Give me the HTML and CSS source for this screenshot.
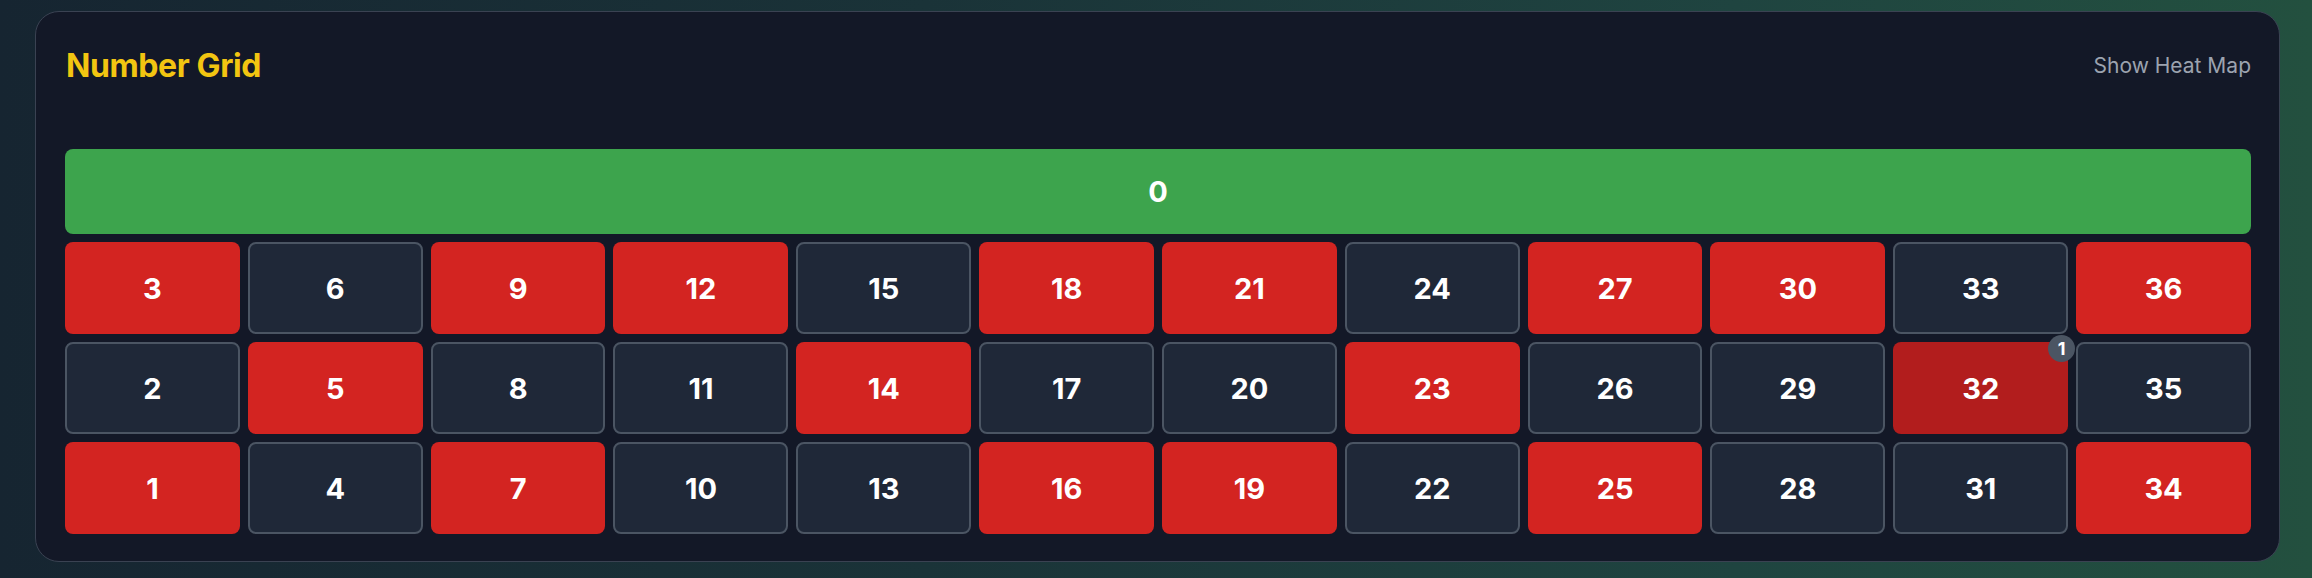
FILE: index.html
```html
<!DOCTYPE html>
<html>
<head>
<meta charset="utf-8">
<link rel="stylesheet" href="styles.css">
</head>
<body>
<div class="page">
  <section class="card">
    <header class="card-header">
      <h2 class="title">Number Grid</h2>
      <button class="toggle">Show Heat Map</button>
    </header>
    <div class="board">
      <div class="zero">0</div>
      <div class="grid">
        <div class="cell red">3</div>
        <div class="cell black">6</div>
        <div class="cell red">9</div>
        <div class="cell red">12</div>
        <div class="cell black">15</div>
        <div class="cell red">18</div>
        <div class="cell red">21</div>
        <div class="cell black">24</div>
        <div class="cell red">27</div>
        <div class="cell red">30</div>
        <div class="cell black">33</div>
        <div class="cell red">36</div>

        <div class="cell black">2</div>
        <div class="cell red">5</div>
        <div class="cell black">8</div>
        <div class="cell black">11</div>
        <div class="cell red">14</div>
        <div class="cell black">17</div>
        <div class="cell black">20</div>
        <div class="cell red">23</div>
        <div class="cell black">26</div>
        <div class="cell black">29</div>
        <div class="cell red hit">32<span class="badge">1</span></div>
        <div class="cell black">35</div>

        <div class="cell red">1</div>
        <div class="cell black">4</div>
        <div class="cell red">7</div>
        <div class="cell black">10</div>
        <div class="cell black">13</div>
        <div class="cell red">16</div>
        <div class="cell red">19</div>
        <div class="cell black">22</div>
        <div class="cell red">25</div>
        <div class="cell black">28</div>
        <div class="cell black">31</div>
        <div class="cell red">34</div>
      </div>
    </div>
  </section>
</div>
</body>
</html>
```

FILE: styles.css
```css
* { box-sizing: border-box; }
html, body {
  margin: 0;
  padding: 0;
  width: 2312px;
  height: 578px;
  overflow: hidden;
}
body {
  font-family: Inter, "Noto Sans", sans-serif;
  background: linear-gradient(90deg, #162531 0%, #1a3338 40%, #1f4440 75%, #23503f 100%);
}
.page {
  padding: 11px 32px 16px 35px;
}
.card {
  width: 2245px;
  height: 551px;
  background: #131827;
  border: 1px solid #3a4252;
  border-radius: 24px;
  padding: 30px 28px 27px 29px;
  display: flex;
  flex-direction: column;
}
.card-header {
  display: flex;
  justify-content: space-between;
  align-items: center;
  height: 48px;
  margin-bottom: 60px;
}
.title {
  margin: 0 0 0 1px;
  font-size: 32px;
  font-weight: 700;
  color: #f2c511;
  letter-spacing: -0.4px;
}
.toggle {
  background: none;
  border: none;
  padding: 0;
  font-family: inherit;
  font-size: 21px;
  color: #9ca3af;
}
.board {
  display: flex;
  flex-direction: column;
  gap: 8px;
}
.zero {
  height: 85px;
  background: #3da44d;
  border-radius: 8px;
  color: #fff;
  font-weight: 700;
  font-size: 29px;
  display: flex;
  align-items: center;
  justify-content: center;
}
.grid {
  display: grid;
  grid-template-columns: repeat(12, 1fr);
  grid-auto-rows: 92px;
  gap: 8px;
}
.cell {
  position: relative;
  border-radius: 8px;
  color: #fff;
  font-weight: 700;
  font-size: 29px;
  display: flex;
  align-items: center;
  justify-content: center;
}
.red { background: #d32421; }
.black {
  background: #1f2838;
  border: 2px solid #4b5563;
}
.hit { background: #b21d1d; }
.badge {
  position: absolute;
  top: -7px;
  right: -7px;
  width: 27px;
  height: 27px;
  border-radius: 50%;
  background: #4b5563;
  color: #fff;
  font-size: 18px;
  font-weight: 700;
  display: flex;
  align-items: center;
  justify-content: center;
}
```
